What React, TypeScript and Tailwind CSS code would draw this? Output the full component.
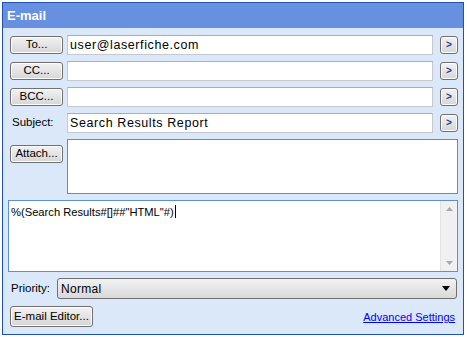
const font = { fontFamily: '"Liberation Sans", Arial, sans-serif' };

function Btn({ label, w = 'w-[53px]', h = 'h-[18px]' }: { label: string; w?: string; h?: string }) {
  return (
    <button
      className={`${w} ${h} shrink-0 rounded-[3px] border border-[#707070] bg-gradient-to-b from-[#f2f2f2] to-[#d6d6d6] text-[11.5px] leading-none text-black shadow-[inset_0_0_0_1px_#fcfcfc]`}
    >
      {label}
    </button>
  );
}

function Arrow() {
  return (
    <button className="flex h-[18px] w-[18px] shrink-0 items-center justify-center rounded-[3px] border border-[#707070] bg-gradient-to-b from-[#f2f2f2] to-[#d6d6d6] shadow-[inset_0_0_0_1px_#fcfcfc]">
      <span className="text-[10px] font-bold leading-none text-[#1c3f94]">&gt;</span>
    </button>
  );
}

function Field({ value = '' }: { value?: string }) {
  return (
    <div className="flex h-[20px] w-[366px] items-center border border-[#c5c8cf] border-t-[#abadb3] bg-white px-[2px] text-[12.5px] tracking-[0.6px] text-black">
      {value}
    </div>
  );
}

export default function App() {
  return (
    <div className="h-[337px] w-[467px] bg-white pl-[2px] pt-[2px]" style={font}>
      <div className="flex h-[333px] w-[462px] flex-col border border-[#1f51b5] bg-[#dbe8fa]">
        <div className="flex h-[25px] items-center bg-[#6790e0] pl-[4px] text-[13px] font-bold text-white">
          E-mail
        </div>

        <div className="flex flex-col pl-[7px] pt-[7px]">
          <div className="flex h-[20px] items-center">
            <Btn label="To..." />
            <div className="ml-[4px]"><Field value="user@laserfiche.com" /></div>
            <div className="ml-[7px]"><Arrow /></div>
          </div>
          <div className="mt-[6px] flex h-[20px] items-center">
            <Btn label="CC..." />
            <div className="ml-[4px]"><Field /></div>
            <div className="ml-[7px]"><Arrow /></div>
          </div>
          <div className="mt-[6px] flex h-[20px] items-center">
            <Btn label="BCC..." />
            <div className="ml-[4px]"><Field /></div>
            <div className="ml-[7px]"><Arrow /></div>
          </div>
          <div className="mt-[6px] flex h-[20px] items-center">
            <span className="w-[53px] pl-[2px] text-[11.5px] text-black">Subject:</span>
            <div className="ml-[4px]"><Field value="Search Results Report" /></div>
            <div className="ml-[7px]"><Arrow /></div>
          </div>
          <div className="mt-[6px] flex items-start">
            <div className="pt-[1px]"><Btn label="Attach..." /></div>
            <div className="ml-[4px] h-[55px] w-[391px] border border-[#828790] bg-white" />
          </div>
        </div>

        <div className="ml-[5px] mt-[6px] flex h-[72px] w-[450px] border border-[#5d8fd3] bg-white">
          <div className="flex-1 px-[2px] pt-[2px] text-[11.2px] leading-[15px] text-black">
            %(Search Results#[]##"HTML"#)<span className="ml-[1px] inline-block h-[13px] w-[1px] translate-y-[2px] bg-black" />
          </div>
          <div className="flex w-[17px] flex-col items-center justify-between border-l border-[#e3e3e3] bg-[#f0f0f0] py-[6px]">
            <svg width="7" height="4" viewBox="0 0 7 4"><path d="M0 4 L3.5 0 L7 4 Z" fill="#a8a8a8" /></svg>
            <svg width="7" height="4" viewBox="0 0 7 4"><path d="M0 0 L3.5 4 L7 0 Z" fill="#a8a8a8" /></svg>
          </div>
        </div>

        <div className="mt-[6px] flex h-[21px] items-center pl-[8px]">
          <span className="w-[46px] text-[11.5px] text-black">Priority:</span>
          <div className="flex h-[21px] w-[400px] items-center justify-between rounded-[3px] border border-[#707070] bg-gradient-to-b from-[#f2f2f2] to-[#d9d9d9] pl-[3px] pr-[6px] text-[12px] tracking-[0.3px] text-black">
            Normal
            <svg width="8" height="5" viewBox="0 0 8 5"><path d="M0 0 L8 0 L4 5 Z" fill="#000" /></svg>
          </div>
        </div>

        <div className="mt-[7px] flex items-center justify-between pl-[7px] pr-[8px]">
          <Btn label="E-mail Editor..." w="w-[83px]" h="h-[21px]" />
          <a className="mt-[2px] text-[11px] text-[#0000ff] underline">Advanced Settings</a>
        </div>
      </div>
    </div>
  );
}
